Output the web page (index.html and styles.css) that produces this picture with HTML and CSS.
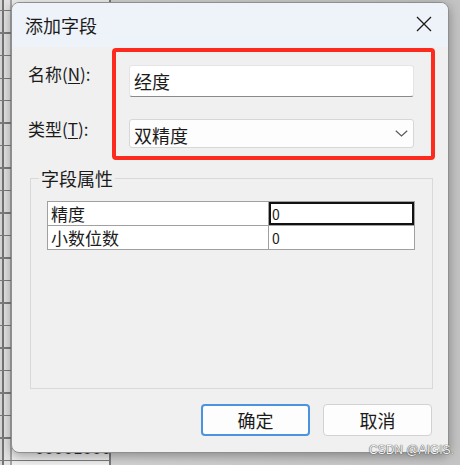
FILE: index.html
```html
<!DOCTYPE html>
<html lang="zh">
<head>
<meta charset="utf-8">
<title>添加字段</title>
<link rel="stylesheet" href="styles.css">
</head>
<body>
<div class="desktop">
  <div class="sheet"></div>
  <div class="digits">00001000</div>
  <div class="dialog">
    <div class="titlebar">
      <span class="title">添加字段</span>
      <span class="close">
        <svg width="16" height="16" viewBox="0 0 16 16"><path d="M1 1 L15 15 M15 1 L1 15" stroke="#1b1b1b" stroke-width="1.3" fill="none"/></svg>
      </span>
    </div>
    <div class="content">
      <div class="form">
        <label class="lbl lbl-name">名称(<u>N</u>):</label>
        <div class="input">经度</div>
        <label class="lbl">类型(<u>T</u>):</label>
        <div class="combo">
          <span>双精度</span>
          <svg width="13" height="7" viewBox="0 0 13 7"><path d="M0.8 0.8 L6.5 6 L12.2 0.8" stroke="#5a5a5a" stroke-width="1.2" fill="none"/></svg>
        </div>
      </div>
      <fieldset class="group">
        <legend>字段属性</legend>
        <table class="props">
          <tr><td class="name">精度</td><td class="val focus">0</td></tr>
          <tr><td class="name">小数位数</td><td class="val">0</td></tr>
        </table>
      </fieldset>
      <div class="buttons">
        <button class="btn primary">确定</button>
        <button class="btn">取消</button>
      </div>
      <div class="highlight"></div>
    </div>
  </div>
  <div class="watermark">CSDN @AIGIS.</div>
</div>
</body>
</html>
```
FILE: styles.css
```css
html, body {
  margin: 0;
  padding: 0;
}
body {
  font-family: "Noto Sans CJK SC", "Noto Sans", sans-serif;
  color: #1b1b1b;
}
.desktop {
  position: relative;
  width: 460px;
  height: 465px;
  overflow: hidden;
  background: linear-gradient(to right, #d8d8d8 0, #c4c4c4 100%);
}
.sheet {
  position: absolute;
  left: 0;
  top: 0;
  width: 109px;
  height: 465px;
  border-right: 2px solid #7a7a7a;
  background-color: #ececec;
  background-image:
    repeating-linear-gradient(to bottom, transparent 0, transparent 10px, #7c7c7c 10px, #7c7c7c 11.5px, transparent 11.5px, transparent 22.5px),
    linear-gradient(to right, #d6d6d6 0, #d6d6d6 2px, #747474 2px, #747474 4px, #e2e2e2 4px, #e2e2e2 10px, #a6a6a6 10px, #a6a6a6 12px, #efefef 12px);
}
.digits {
  position: absolute;
  left: 35px;
  top: 442px;
  font-family: "DejaVu Sans", sans-serif;
  font-weight: bold;
  font-size: 13px;
  letter-spacing: 0.5px;
  color: #2a2a2a;
}
.dialog {
  position: absolute;
  left: 11px;
  top: 2px;
  width: 438px;
  height: 451px;
  box-sizing: border-box;
  border: 1px solid #8f8f8f;
  border-radius: 8px;
  background: #f0f0f0;
  box-shadow: 0 3px 12px rgba(0, 0, 0, 0.35);
  overflow: hidden;
  display: flex;
  flex-direction: column;
}
.titlebar {
  height: 44px;
  flex: none;
  background: #eef2f9;
  display: flex;
  align-items: center;
  justify-content: space-between;
  padding: 0 16px 0 13px;
}
.title {
  font-size: 18px;
  line-height: 22px;
}
.close {
  display: flex;
  margin-top: -2px;
}
.content {
  position: relative;
  flex: 1;
  display: flex;
  flex-direction: column;
  padding: 18px 16px 16px 16px;
}
.form {
  display: grid;
  grid-template-columns: 101px 285px;
  grid-template-rows: 32px 29px;
  row-gap: 22px;
}
.lbl {
  font-size: 17px;
  line-height: 20px;
  align-self: start;
}
.lbl-name {
  margin-top: -1px;
}
.lbl u {
  text-underline-offset: 2px;
}
.input {
  box-sizing: border-box;
  background: #ffffff;
  border: 1px solid #e4e4e4;
  border-bottom: 1px solid #8a8a8a;
  border-radius: 3px;
  padding: 0 4px;
  font-size: 18px;
  display: flex;
  align-items: center;
}
.combo {
  box-sizing: border-box;
  background: #fdfdfd;
  border: 1px solid #d7d7d7;
  border-radius: 3px;
  padding: 2px 5px 0 4px;
  font-size: 18px;
  display: flex;
  align-items: center;
  justify-content: space-between;
}
.combo svg {
  margin-top: -3px;
}
.group {
  flex: 1;
  margin: 20px -1px 0 2px;
  border: 1px solid #d9d9d9;
  padding: 13px 17px 0 8px;
  min-width: 0;
}
.group legend {
  font-size: 18px;
  line-height: 20px;
  padding: 0 2px;
}
.props {
  margin-left: 8px;
  width: 368px;
  border-collapse: collapse;
  border: 1px solid #a0a0a0;
  background: #ffffff;
}
.props td {
  border: 1px solid #a0a0a0;
  height: 24px;
  padding: 0 3px;
  box-sizing: border-box;
  line-height: 18px;
  vertical-align: middle;
}
.props .name {
  width: 221px;
  font-size: 17px;
}
.props .val {
  font-size: 14px;
}
.props .focus {
  box-shadow: inset 0 0 0 2px #111111;
}
.buttons {
  display: flex;
  justify-content: flex-end;
  gap: 13px;
  margin-top: 15px;
}
.btn {
  width: 109px;
  height: 32px;
  box-sizing: border-box;
  border: 1px solid #d2d2d2;
  border-radius: 4px;
  background: #fdfdfd;
  font-family: "Noto Sans CJK SC", sans-serif;
  font-size: 18px;
  color: #1b1b1b;
  padding: 0;
}
.btn.primary {
  border: 2px solid #4a93de;
}
.highlight {
  position: absolute;
  left: 100px;
  top: 1px;
  width: 323px;
  height: 112px;
  box-sizing: border-box;
  border: 4px solid #fd2a1e;
  border-radius: 4px;
}
.watermark {
  position: absolute;
  left: 369px;
  top: 443px;
  font-family: "Liberation Sans", sans-serif;
  font-size: 12px;
  color: #f6f6f6;
  text-shadow: 0 0 1px #444, 0 0 1px #444;
}
```
